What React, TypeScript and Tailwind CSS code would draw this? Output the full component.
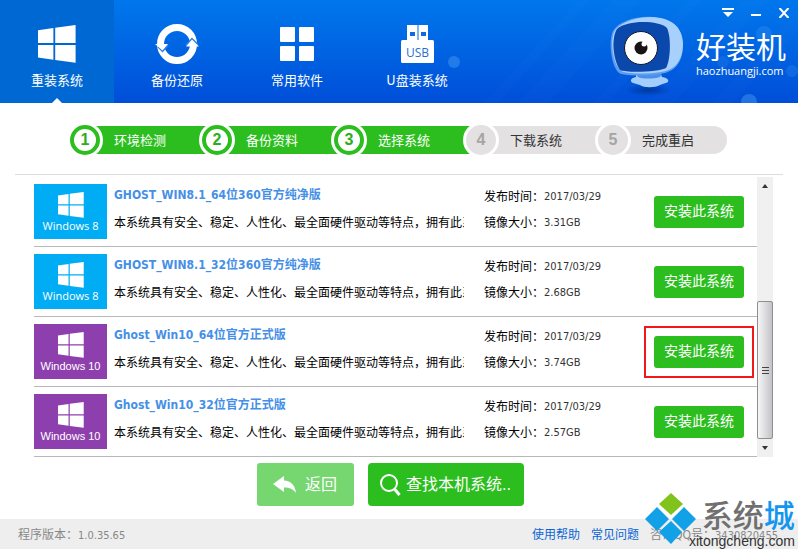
import type { ReactNode } from 'react';

interface SystemItem {
  id: number;
  version: '8' | '10';
  title: string;
  date: string;
  size: string;
  highlighted?: boolean;
}

const DESCRIPTION = '本系统具有安全、稳定、人性化、最全面硬件驱动等特点，拥有此系统';

const systems: SystemItem[] = [
  { id: 1, version: '8', title: 'GHOST_WIN8.1_64位360官方纯净版', date: '2017/03/29', size: '3.31GB' },
  { id: 2, version: '8', title: 'GHOST_WIN8.1_32位360官方纯净版', date: '2017/03/29', size: '2.68GB' },
  { id: 3, version: '10', title: 'Ghost_Win10_64位官方正式版', date: '2017/03/29', size: '3.74GB', highlighted: true },
  { id: 4, version: '10', title: 'Ghost_Win10_32位官方正式版', date: '2017/03/29', size: '2.57GB' },
];

const steps = [
  { label: '环境检测', done: true },
  { label: '备份资料', done: true },
  { label: '选择系统', done: true },
  { label: '下载系统', done: false },
  { label: '完成重启', done: false },
];

function WindowsIcon({ className }: { className: string }) {
  return (
    <svg viewBox="0 0 38 38" className={className} fill="currentColor" aria-hidden="true">
      <path d="M0 5.2 15.4 3v15H0zM17.2 2.7 37.6 0v18H17.2zM0 19.9h15.4v14.8L0 32.5zM17.2 19.9h20.4v17.8l-20.4-2.8z" />
    </svg>
  );
}

function RefreshIcon() {
  return (
    <svg viewBox="0 0 44 40" className="h-10 w-11" aria-hidden="true">
      <circle cx="22" cy="20" r="16.500" fill="none" stroke="#fff" strokeWidth="7" />
      <path fill="none" stroke="#2f7fe6" strokeWidth="2" d="M3 22.500 7.500 27l5.500-6M31 21.500l6-6.500 6 6" />
      <path fill="#fff" d="M0 20h13l-5.500 6.500zM31 22.500h13L37 15.500z" />
    </svg>
  );
}

function AppsIcon() {
  return (
    <svg viewBox="0 0 34 34" className="size-[34px]" fill="#fff" aria-hidden="true">
      <rect width="15" height="15" rx="1" />
      <rect x="19" width="15" height="15" rx="1" />
      <rect y="19" width="15" height="15" rx="1" />
      <rect x="19" y="19" width="15" height="15" rx="1" />
    </svg>
  );
}

function UsbIcon() {
  return (
    <svg viewBox="0 0 33 38" className="h-[38px] w-[33px]" aria-hidden="true">
      <path fill="#fff" d="M6 0h10.500v16H6zM17.500 0H27v16h-9.500z" />
      <path fill="#1268e0" d="M9 7h5v4H9zM20 7h5v4h-5z" />
      <rect y="15" width="33" height="23" rx="1.500" fill="#fff" />
      <text x="16.500" y="32" textAnchor="middle" fontSize="12" fontFamily="Open Sans, sans-serif" fill="#2a6fd0">
        USB
      </text>
    </svg>
  );
}

function MonitorLogo() {
  return (
    <svg viewBox="0 0 76 80" className="h-20 w-[76px]" aria-hidden="true">
      <defs>
        <radialGradient id="shadow">
          <stop offset="0" stopColor="#00338f" stopOpacity=".8" />
          <stop offset="1" stopColor="#00338f" stopOpacity="0" />
        </radialGradient>
      </defs>
      <ellipse cx="38" cy="74" rx="24" ry="6" fill="url(#shadow)" />
      <path fill="#a5cdfb" d="M26 56h24l2 5c7 1 8 5 4 6-3 1-4 1-6 2-5 3-16 3-20 0-3-1-4-1-7-2-4-2-2-5 3-6z" />
      <path fill="#4a8fe8" d="M26 57h26l-2 4c-7 2-17 2-22 0z" />
      <path fill="#5b9cf0" d="M3 15C9 5 26 0 42 1c20 2 30 9 31 27 0 20-9 28-23 30-12 2-27 2-39 0C1 54-2 24 3 15z" />
      <path fill="#a8d0fd" d="M5 14C13 5 27 1 42 1c19 1 30 9 31 26 0 18-8 27-22 29-13 2-26 2-38 0C3 52-1 24 5 14z" />
      <path fill="#0a48ab" d="M7 13c10-9 41-9 50-1 4 8 4 31-1 40-6 4-40 5-46 2C3 44 1 22 7 13z" />
      <circle cx="31" cy="32" r="16.500" fill="#fff" stroke="#111827" strokeWidth="1" />
      <circle cx="31" cy="32" r="6.500" fill="#181414" />
      <circle cx="34" cy="28" r="2.500" fill="#fff" />
    </svg>
  );
}

function HeaderDecor() {
  return (
    <svg
      viewBox="0 0 400 103"
      preserveAspectRatio="xMaxYMin slice"
      className="absolute right-0 top-0 h-full w-[400px]"
      aria-hidden="true"
    >
      <g fill="#4aa0ff" fillOpacity=".04">
        <path d="M180 0h12L100 103H86zM215 0h30L150 103h-30zM290 0h14l-95 103h-14zM345 0h26l-95 103h-26zM400 10v22l-66 71h-20z" />
      </g>
      <g fill="#53a7f7">
        <circle cx="56" cy="62" r="6" fillOpacity=".4" />
        <circle cx="366" cy="34" r="8" fillOpacity=".22" />
        <circle cx="351" cy="102" r="8" fillOpacity=".4" />
        <circle cx="394" cy="71" r="6" fillOpacity=".2" />
        <circle cx="325" cy="62" r="6" fillOpacity=".15" />
      </g>
    </svg>
  );
}

function NavTab({ label, active, children }: { label: string; active?: boolean; children: ReactNode }) {
  return (
    <button
      type="button"
      className={`relative flex h-full w-[114px] flex-col items-center pt-[22px] text-[13px] leading-5 text-white ${
        active ? 'bg-[#0068d2]' : ''
      }`}
    >
      <span className="flex h-11 items-center justify-center">{children}</span>
      <span className="mt-1">{label}</span>
      {active && (
        <span className="absolute bottom-0 border-x-[5px] border-b-[5px] border-x-transparent border-b-white" />
      )}
    </button>
  );
}

function Header() {
  return (
    <header className="relative flex h-[103px] justify-between bg-linear-to-b from-[#0077ec] to-[#004ed8] font-['Noto_Sans_CJK_SC',sans-serif]">
      <HeaderDecor />
      <nav className="relative flex gap-[6px]">
        <NavTab label="重装系统" active>
          <WindowsIcon className="size-[38px]" />
        </NavTab>
        <NavTab label="备份还原">
          <RefreshIcon />
        </NavTab>
        <NavTab label="常用软件">
          <AppsIcon />
        </NavTab>
        <NavTab label="U盘装系统">
          <UsbIcon />
        </NavTab>
      </nav>
      <div className="relative flex gap-[10px] pr-3 text-white">
        <div className="pt-4">
          <MonitorLogo />
        </div>
        <div className="flex flex-col items-start">
          <div className="-mr-1 flex h-[26px] items-center gap-4 self-end">
            <button type="button" aria-label="菜单">
              <svg viewBox="0 0 12 10" className="h-[10px] w-3" fill="#fff">
                <path d="M0 0h12v2H0zM1 4h10L6 9z" />
              </svg>
            </button>
            <button type="button" aria-label="最小化">
              <svg viewBox="0 0 12 10" className="h-[10px] w-3" fill="#fff">
                <path d="M1 6h10v2H1z" />
              </svg>
            </button>
            <button type="button" aria-label="关闭">
              <svg viewBox="0 0 12 10" className="h-[10px] w-3" fill="none" stroke="#fff" strokeWidth="2">
                <path d="m1.500 0 9 10M10.500 0l-9 10" />
              </svg>
            </button>
          </div>
          <div className="text-[30px] leading-[39px]">好装机</div>
          <div className="font-['Open_Sans','Noto_Sans',sans-serif] text-[11px] leading-3">haozhuangji.com</div>
        </div>
      </div>
    </header>
  );
}

function Stepper() {
  return (
    <ol className="flex justify-center pr-1 pt-[19px]">
      {steps.map((step, index) => (
        <li key={step.label} className="group flex w-[132px] items-center">
          <span
            className={`relative z-10 -mr-[18px] flex size-9 shrink-0 items-center justify-center rounded-full border-[3px] border-white font-['Liberation_Sans',sans-serif] text-[16px] font-bold ${
              step.done ? 'bg-[#2bbe1e] text-[#2bae20]' : 'bg-[#e3e1e2] text-[#a5a5a5]'
            }`}
          >
            <span className={`flex size-[22px] items-center justify-center rounded-full ${step.done ? 'bg-white' : ''}`}>
              {index + 1}
            </span>
          </span>
          <span
            className={`-mr-[18px] flex h-7 flex-1 items-center pl-[29px] pt-[2px] text-[13px] group-last:mr-0 group-last:rounded-r-full ${
              step.done ? 'bg-[#2bbe1e] text-white' : 'bg-[#e3e1e2] text-[#333]'
            }`}
          >
            {step.label}
          </span>
        </li>
      ))}
    </ol>
  );
}

function SystemRow({ item }: { item: SystemItem }) {
  return (
    <li className="flex h-[70px] items-center border-b border-[#b8b8b8] pr-[13px]">
      <div
        className={`mr-[7px] flex h-[55px] w-[73px] shrink-0 flex-col items-center pt-2 text-white ${
          item.version === '8' ? 'bg-[#00adf4]' : 'bg-[#8e3fae]'
        }`}
      >
        <WindowsIcon className="size-[26px]" />
        <span
          className={`text-[11px] leading-4 ${
            item.version === '8'
              ? "font-['Open_Sans','Noto_Sans',sans-serif]"
              : "font-['Liberation_Sans',sans-serif]"
          }`}
        >
          Windows {item.version}
        </span>
      </div>
      <div className="min-w-0 flex-1 overflow-hidden whitespace-nowrap pb-1 text-[12px]">
        <h2 className="pb-1 font-bold leading-[22px] text-[#4590e6]">{item.title}</h2>
        <p className="leading-[26px] text-black">{DESCRIPTION}</p>
      </div>
      <dl className="ml-5 grid w-[170px] shrink-0 grid-cols-[60px_1fr] pb-1 text-[12px] leading-[26px] text-black">
        <dt>发布时间：</dt>
        <dd className="text-[11px] text-[#333]">{item.date}</dd>
        <dt>镜像大小：</dt>
        <dd className="text-[11px] text-[#333]">{item.size}</dd>
      </dl>
      <div className={`shrink-0 ${item.highlighted ? 'outline-2 outline-offset-8 outline-[#f01818]' : ''}`}>
        <button type="button" className="block h-8 w-[90px] rounded-[3px] bg-[#2bbe1e] text-[14px] text-white">
          安装此系统
        </button>
      </div>
    </li>
  );
}

function ScrollBar() {
  return (
    <div className="flex w-4 shrink-0 flex-col bg-[#f0f0f0]">
      <button type="button" aria-label="向上滚动" className="flex h-[17px] items-center justify-center">
        <span className="border-x-[3px] border-b-[4px] border-x-transparent border-b-[#333]" />
      </button>
      <div className="flex flex-1 flex-col justify-end">
        <div className="flex h-[138px] flex-col items-center justify-center gap-[2px] rounded-[2px] border border-[#8e8e8e] bg-linear-to-r from-[#f6f6f6] to-[#c4c4c8]">
          <span className="h-px w-[7px] bg-[#444]" />
          <span className="h-px w-[7px] bg-[#444]" />
          <span className="h-px w-[7px] bg-[#444]" />
        </div>
      </div>
      <button type="button" aria-label="向下滚动" className="flex h-[18px] items-center justify-center">
        <span className="border-x-[3px] border-t-[4px] border-x-transparent border-t-[#333]" />
      </button>
    </div>
  );
}

function Watermark() {
  return (
    <div className="pointer-events-none absolute bottom-0 right-[3px] flex h-[56px] w-[150px]">
      <svg viewBox="0 0 52 52" className="size-[52px] shrink-0" aria-hidden="true">
        <path fill="#80c31c" d="m26 0 12 11-12 11L14 11z" />
        <path fill="#12a0e6" d="m12 14 12 12-12 12L0 26zM39 14l12 12-12 12-12-12zM26 28l11 11-11 12-12-12z" />
      </svg>
      <div className="-ml-2 flex flex-col items-end whitespace-nowrap">
        <div className="mt-[5px] text-[31px] leading-9 font-medium text-[#707070]">
          系统<span className="text-[#1296ee]">城</span>
        </div>
        <div className="font-['Liberation_Sans',sans-serif] text-[14px] leading-[14px] text-[#333]">xitongcheng.com</div>
      </div>
    </div>
  );
}

export default function App() {
  return (
    <div className="relative flex min-h-screen flex-col bg-white font-['DejaVu_Sans_Condensed','Noto_Sans_CJK_SC',sans-serif]">
      <Header />
      <main className="flex-1">
        <Stepper />
        <section className="mx-[15px] mt-4 border-t border-[#ddd] pl-[19px] pr-[10px] pt-[2px]">
          <div className="flex">
            <ul className="min-w-0 flex-1">
              {systems.map((item) => (
                <SystemRow key={item.id} item={item} />
              ))}
            </ul>
            <ScrollBar />
          </div>
        </section>
        <div className="flex justify-center gap-[14px] pb-[13px] pr-[18px] pt-[6px] text-[16px] text-white">
          <button type="button" className="flex h-[43px] w-[97px] items-center justify-center gap-2 rounded-[3px] bg-[#76d66f]">
            <svg viewBox="0 0 24 18" className="h-[18px] w-6" fill="#fff" aria-hidden="true">
              <path d="M0 8 11 0v4.500c7 .5 11 4.500 12 12.500-3-4-6-5.500-12-5.500V16z" />
            </svg>
            返回
          </button>
          <button type="button" className="flex h-[43px] w-[156px] items-center justify-center gap-[5px] rounded-[4px] bg-[#2bbe1e]">
            <svg viewBox="0 0 21 22" className="h-[22px] w-[21px]" fill="none" stroke="#fff" aria-hidden="true">
              <circle cx="9" cy="9" r="8" strokeWidth="2" />
              <path d="m14.500 15 5 6" strokeWidth="3" />
            </svg>
            查找本机系统..
          </button>
        </div>
      </main>
      <footer className="flex h-[30px] items-center justify-between bg-[#eee] pl-[18px] pr-5 pt-[2px] text-[12px] text-[#888]">
        <span>
          程序版本：<span className="text-[11px]">1.0.35.65</span>
        </span>
        <div className="flex gap-[11px]">
          <a href="#help" className="text-[#0a66d6]">
            使用帮助
          </a>
          <a href="#faq" className="text-[#0a66d6]">
            常见问题
          </a>
          <span>
            咨询QQ号：<span className="text-[11px]">3430820455</span>
          </span>
        </div>
      </footer>
      <Watermark />
    </div>
  );
}
